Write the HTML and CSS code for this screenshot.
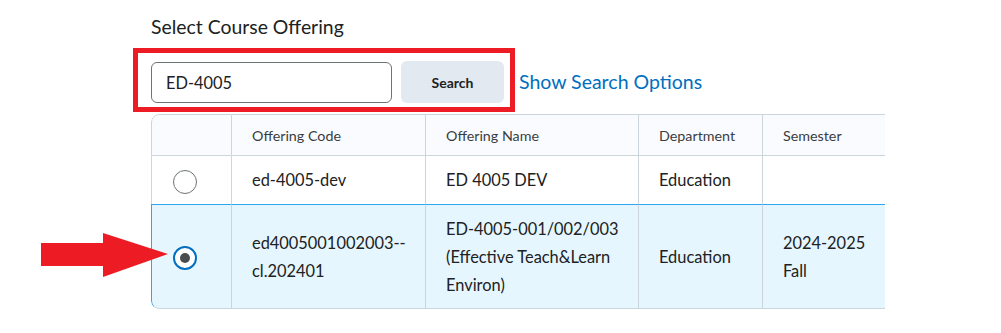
FILE: index.html
```html
<!DOCTYPE html>
<html lang="en">
<head>
<meta charset="utf-8">
<title>Select Course Offering</title>
<link rel="stylesheet" href="styles.css">
</head>
<body>
<main class="page">
  <h1 class="title">Select Course Offering</h1>
  <div class="search-row">
    <div class="highlight">
      <input class="search-input" type="text" value="ED-4005">
      <button class="search-btn" type="button">Search</button>
    </div>
    <a class="options-link" href="#">Show Search Options</a>
  </div>
  <div class="table-wrap">
    <table class="grid">
      <thead>
        <tr>
          <th class="c-sel"></th>
          <th class="c-code">Offering Code</th>
          <th class="c-name">Offering Name</th>
          <th class="c-dept">Department</th>
          <th class="c-sem">Semester</th>
          <th class="c-more"></th>
        </tr>
      </thead>
      <tbody>
        <tr class="row1">
          <td class="c-sel"><span class="radio"></span></td>
          <td>ed-4005-dev</td>
          <td>ED 4005 DEV</td>
          <td>Education</td>
          <td></td>
          <td></td>
        </tr>
        <tr class="row2 selected">
          <td class="c-sel"><span class="radio checked"></span></td>
          <td>ed4005001002003--<br>cl.202401</td>
          <td>ED-4005-001/002/003<br>(Effective Teach&amp;Learn<br>Environ)</td>
          <td>Education</td>
          <td>2024-2025<br>Fall</td>
          <td></td>
        </tr>
      </tbody>
    </table>
  </div>
</main>
<svg class="arrow" width="130" height="46" viewBox="0 0 130 46" aria-hidden="true">
  <polygon points="0,10 62,10 62,0 127,21 62,44 62,33 0,33" fill="#ed1c24"/>
</svg>
</body>
</html>
```

FILE: styles.css
```css
html, body {
  margin: 0;
  padding: 0;
  background: #ffffff;
}

body {
  font-family: Lato, "Open Sans", "Liberation Sans", sans-serif;
  color: #202122;
  position: relative;
  width: 1001px;
  height: 333px;
  overflow: hidden;
}

.page {
  padding: 14px 0 0 151px;
}

.title {
  margin: 0;
  font-size: 19.4px;
  font-weight: 400;
  line-height: 26px;
  color: #202122;
}

.search-row {
  display: flex;
  align-items: center;
  margin-top: 8px;
  margin-left: -18px;
}

.highlight {
  display: flex;
  align-items: flex-start;
  gap: 9px;
  border: 5px solid #ed1c24;
  width: 359px;
  height: 45px;
  padding: 9px 0 0 13px;
  box-sizing: content-box;
}

.search-input {
  box-sizing: border-box;
  width: 241px;
  height: 41px;
  border: 1px solid #6e7376;
  border-radius: 6px;
  padding: 0 14px;
  font-family: inherit;
  font-size: 16.4px;
  color: #202122;
  background: #fff;
  outline: none;
}

.search-btn {
  box-sizing: border-box;
  width: 103px;
  height: 42px;
  border: none;
  border-radius: 6px;
  background: #e3e9f1;
  font-family: inherit;
  font-size: 14px;
  font-weight: 700;
  color: #202122;
  margin-top: -1px;
}

.options-link {
  margin-left: 4px;
  margin-top: 3px;
  font-size: 19.5px;
  color: #006fbf;
  text-decoration: none;
}

.table-wrap {
  margin-top: 2px;
  width: 734px;
  overflow: hidden;
  border-radius: 8px 0 0 8px;
}

.grid {
  border-collapse: separate;
  border-spacing: 0;
  width: 915px;
  table-layout: fixed;
}

.grid th,
.grid td {
  text-align: left;
  vertical-align: middle;
  padding: 0 20px;
  white-space: nowrap;
  border-right: 1px solid #cdd5dc;
  border-bottom: 1px solid #cdd5dc;
}

.grid th:first-child,
.grid td:first-child {
  border-left: 1px solid #cdd5dc;
}

.grid th {
  height: 40px;
  border-top: 1px solid #cdd5dc;
  background: #f9fbff;
  font-size: 14.3px;
  font-weight: 400;
  color: #3a3d40;
}

.grid th:first-child {
  border-top-left-radius: 8px;
}

.grid td {
  font-size: 16.4px;
  line-height: 28px;
  color: #202122;
}

.c-sel { width: 79px; }
.c-code { width: 153px; }
.c-name { width: 172px; }
.c-dept { width: 83px; }
.c-sem { width: 101px; }
.c-more { width: 120px; }

.grid th.c-sel,
.grid td.c-sel {
  text-align: center;
  padding: 0;
}

.row1 td {
  height: 48px;
  border-bottom: none;
}

.row2 td {
  height: 103px;
  background: #e5f6fe;
  border-top: 1px solid #2ea7f0;
  border-bottom-color: #cdd5dc;
}

.row2 td:first-child {
  border-left-color: #2ea7f0;
  border-bottom-left-radius: 8px;
}

.radio {
  display: inline-block;
  box-sizing: border-box;
  width: 24px;
  height: 24px;
  border: 1px solid #6e7376;
  border-radius: 50%;
  background: #fff;
  vertical-align: middle;
  position: relative;
  left: -7px;
}

.radio.checked {
  border: 2px solid #006fbf;
}

.radio.checked::after {
  content: "";
  position: absolute;
  left: 5px;
  top: 5px;
  width: 10px;
  height: 10px;
  border-radius: 50%;
  background: #494c4e;
}

.arrow {
  position: absolute;
  left: 41px;
  top: 233px;
}
```
